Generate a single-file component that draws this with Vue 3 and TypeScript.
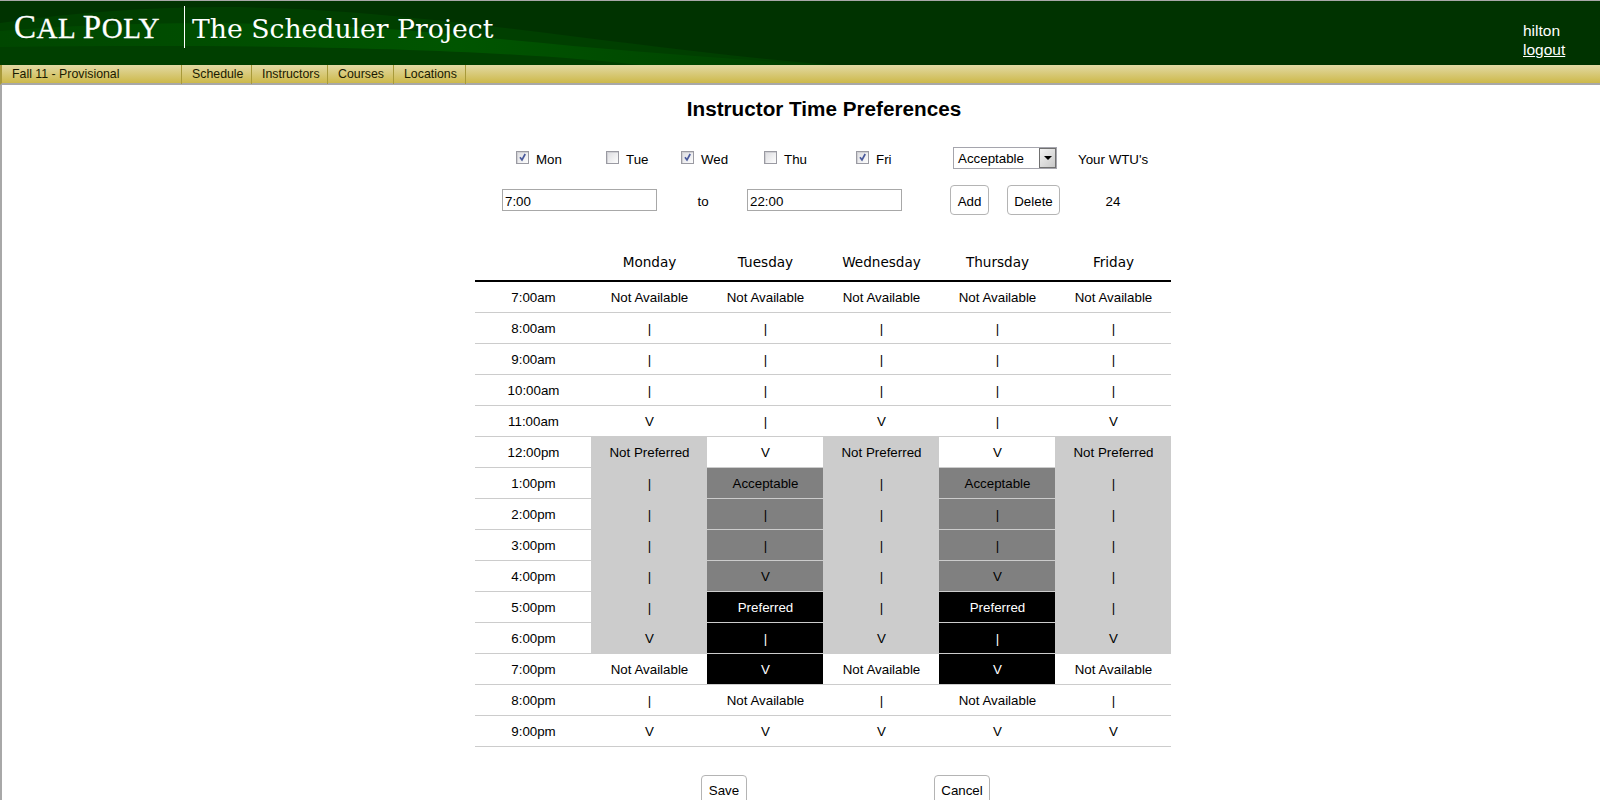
<script setup lang="ts">
type Tone = '' | 'np' | 'ac' | 'pr'
interface Cell { text: string; tone: Tone }

const navItems = ['Schedule', 'Instructors', 'Courses', 'Locations']
const days = [
  { name: 'Mon', on: true, cls: 'w90' },
  { name: 'Tue', on: false, cls: 'w75' },
  { name: 'Wed', on: true, cls: 'w83' },
  { name: 'Thu', on: false, cls: 'w92' },
  { name: 'Fri', on: true, cls: 'w97' },
]
const headers = ['Monday', 'Tuesday', 'Wednesday', 'Thursday', 'Friday']

const NA = 'Not Available'
const NP = 'Not Preferred'
const AC = 'Acceptable'
const PR = 'Preferred'
const B = '|'
const V = 'V'

const raw: [string, string[], Tone[]][] = [
  ['7:00am', [NA, NA, NA, NA, NA], ['', '', '', '', '']],
  ['8:00am', [B, B, B, B, B], ['', '', '', '', '']],
  ['9:00am', [B, B, B, B, B], ['', '', '', '', '']],
  ['10:00am', [B, B, B, B, B], ['', '', '', '', '']],
  ['11:00am', [V, B, V, B, V], ['', '', '', '', '']],
  ['12:00pm', [NP, V, NP, V, NP], ['np', '', 'np', '', 'np']],
  ['1:00pm', [B, AC, B, AC, B], ['np', 'ac', 'np', 'ac', 'np']],
  ['2:00pm', [B, B, B, B, B], ['np', 'ac', 'np', 'ac', 'np']],
  ['3:00pm', [B, B, B, B, B], ['np', 'ac', 'np', 'ac', 'np']],
  ['4:00pm', [B, V, B, V, B], ['np', 'ac', 'np', 'ac', 'np']],
  ['5:00pm', [B, PR, B, PR, B], ['np', 'pr', 'np', 'pr', 'np']],
  ['6:00pm', [V, B, V, B, V], ['np', 'pr', 'np', 'pr', 'np']],
  ['7:00pm', [NA, V, NA, V, NA], ['', 'pr', '', 'pr', '']],
  ['8:00pm', [B, NA, B, NA, B], ['', '', '', '', '']],
  ['9:00pm', [V, V, V, V, V], ['', '', '', '', '']],
]
const rows = raw.map(([time, texts, tones]) => ({
  time,
  cells: texts.map((text, i): Cell => ({ text, tone: tones[i] })),
}))
</script>

<template>
  <div class="page">
    <header class="banner">
      <svg class="swoosh" viewBox="0 0 1600 64" preserveAspectRatio="none" aria-hidden="true">
        <defs>
          <linearGradient id="bandB" x1="0" y1="0" x2="1" y2="0">
            <stop offset="0" stop-color="#004700" />
            <stop offset="0.55" stop-color="#005500" />
            <stop offset="1" stop-color="#004000" />
          </linearGradient>
        </defs>
        <path d="M0 0H1600V64H0Z" fill="#003300" />
        <path d="M0 22C100 8 200 3 300 8C480 18 640 48 830 64H0Z" fill="#003f00" />
        <path d="M0 30C150 18 330 20 480 36C600 48 720 58 830 64H640C520 50 300 42 0 46Z" fill="url(#bandB)" />
      </svg>
      <div class="logo"><span class="cap">C</span>AL <span class="cap">P</span>OLY</div>
      <div class="divider"></div>
      <div class="title">The Scheduler Project</div>
      <div class="user">
        <div>hilton</div>
        <a class="logout">logout</a>
      </div>
    </header>

    <nav class="nav">
      <div class="term">Fall 11 - Provisional</div>
      <a v-for="item in navItems" :key="item" class="nav-item">{{ item }}</a>
    </nav>

    <main class="main">
      <h1 class="heading">Instructor Time Preferences</h1>

      <div class="form-row first">
        <label v-for="d in days" :key="d.name" class="day" :class="d.cls">
          <span class="check">
            <svg v-if="d.on" viewBox="0 0 11 11" width="11" height="11" aria-hidden="true">
              <path d="M3 5.2L5 8L8.2 2" fill="none" stroke="#4a5a9c" stroke-width="1.7" />
            </svg>
          </span>
          <span class="day-name">{{ d.name }}</span>
        </label>
        <div class="select">
          <span class="select-value">Acceptable</span>
          <span class="select-arrow"></span>
        </div>
        <div class="wtu-label">Your WTU's</div>
      </div>

      <div class="form-row second">
        <input class="time" type="text" value="7:00" />
        <span class="to">to</span>
        <input class="time" type="text" value="22:00" />
        <button class="btn add" type="button">Add</button>
        <button class="btn del" type="button">Delete</button>
        <span class="wtu">24</span>
      </div>

      <table class="grid">
        <thead>
          <tr>
            <th></th>
            <th v-for="h in headers" :key="h">{{ h }}</th>
          </tr>
        </thead>
        <tbody>
          <tr v-for="r in rows" :key="r.time">
            <td>{{ r.time }}</td>
            <td v-for="(c, i) in r.cells" :key="i" :class="c.tone">{{ c.text }}</td>
          </tr>
        </tbody>
      </table>

      <div class="actions">
        <button class="btn save" type="button">Save</button>
        <button class="btn cancel" type="button">Cancel</button>
      </div>
    </main>
  </div>
</template>

<style scoped>
.page {
  width: 1600px;
  height: 800px;
  overflow: hidden;
  display: flex;
  flex-direction: column;
  font-family: "Liberation Sans", Arial, sans-serif;
  font-size: 13.33px;
  color: #000;
  background: #fff;
}
.banner {
  position: relative;
  height: 64px;
  flex: none;
  border-top: 1px solid #a8a8a8;
  display: flex;
  align-items: flex-start;
  background: #003300;
  color: #fff;
}
.swoosh {
  position: absolute;
  inset: 0;
  width: 100%;
  height: 100%;
}
.logo,
.divider,
.title,
.user {
  position: relative;
}
.logo {
  margin: 8px 0 0 14px;
  width: 170px;
  font-family: "Liberation Serif", "Times New Roman", serif;
  font-size: 29px;
  line-height: 36px;
  letter-spacing: 0.5px;
  -webkit-text-stroke: 0.3px #fff;
  white-space: nowrap;
}
.cap {
  font-size: 33px;
}
.divider {
  width: 1px;
  height: 42px;
  margin-top: 5px;
  background: #fff;
}
.title {
  margin: 10px 0 0 7px;
  font-family: "DejaVu Serif", serif;
  font-size: 26.67px;
  line-height: 36px;
  white-space: nowrap;
}
.user {
  margin: 20px 0 0 auto;
  width: 77px;
  font-size: 15.5px;
  line-height: 19px;
}
.logout {
  text-decoration: underline;
}
.nav {
  height: 18px;
  flex: none;
  display: grid;
  grid-template-columns: 180px 70px 76px 66px 72px;
  border-left: 2px solid #a89a3a;
  background: linear-gradient(#e2d9a4, #cdb94a);
  border-bottom: 2px solid #a8a8a8;
  font-size: 12.35px;
  line-height: 19px;
  color: #1a1a00;
}
.term {
  padding-left: 10px;
  border-right: 1px solid #a89a3a;
}
.nav-item {
  padding-left: 10px;
  border-right: 1px solid #a89a3a;
}
.main {
  flex: 1;
  border-left: 2px solid #a8a8a8;
  padding-left: 473px;
}
.heading {
  box-sizing: border-box;
  width: 696px;
  margin: 13px 0 0;
  padding-left: 2px;
  text-align: center;
  font-size: 20.7px;
  line-height: 22px;
  font-weight: bold;
}
.form-row {
  display: flex;
  align-items: center;
}
.first {
  height: 22px;
  margin-top: 28px;
  padding-left: 41px;
}
.day {
  display: flex;
  align-items: center;
}
.w90 { width: 90px; }
.w75 { width: 75px; }
.w83 { width: 83px; }
.w92 { width: 92px; }
.w97 { width: 97px; }
.check {
  box-sizing: border-box;
  width: 13px;
  height: 13px;
  border: 1px solid #9a9aa2;
  box-shadow: inset 1px 1px 0 #d0d0d4;
  background: linear-gradient(135deg, #dcdce0, #fdfdfd);
  display: flex;
  margin-top: -3px;
}
.day-name {
  margin-left: 7px;
}
.select {
  box-sizing: border-box;
  width: 104px;
  height: 22px;
  margin-top: -2px;
  border: 1px solid #a5a5ad;
  display: flex;
  align-items: center;
  justify-content: space-between;
}
.select-value {
  padding-left: 4px;
}
.select-arrow {
  position: relative;
  box-sizing: border-box;
  width: 17px;
  height: 20px;
  border: 1px solid #707070;
  background: linear-gradient(135deg, #f4f4f4, #c8c8c8);
}
.select-arrow::after {
  content: "";
  position: absolute;
  left: 4px;
  top: 7px;
  border-left: 4px solid transparent;
  border-right: 4px solid transparent;
  border-top: 4px solid #000;
}
.wtu-label {
  margin-left: 21px;
  white-space: nowrap;
}
.second {
  height: 30px;
  margin-top: 15px;
  padding-left: 27px;
}
.time {
  box-sizing: border-box;
  width: 155px;
  height: 22px;
  border: 1px solid #a8a8a8;
  border-radius: 0;
  padding: 2px 2px 0;
  font: 13.33px "Liberation Sans", Arial, sans-serif;
  color: #000;
  outline: none;
}
.to {
  box-sizing: border-box;
  width: 90px;
  padding: 2px 0 0 2px;
  text-align: center;
}
.btn {
  box-sizing: border-box;
  height: 30px;
  padding: 2px 0 0;
  background: #fff;
  border: 1px solid #b4b4b4;
  border-radius: 4px;
  font: 13.33px "Liberation Sans", Arial, sans-serif;
  color: #000;
}
.add {
  width: 39px;
  margin-left: 48px;
}
.del {
  width: 53px;
  margin-left: 18px;
}
.wtu {
  box-sizing: border-box;
  width: 104px;
  padding: 2px 0 0 2px;
  text-align: center;
}
.grid {
  width: 696px;
  margin-top: 18px;
  border-collapse: collapse;
  table-layout: fixed;
}
.grid th {
  height: 48px;
  padding: 10px 0 0 1px;
  box-sizing: border-box;
  border-bottom: 2px solid #000;
  font-family: "DejaVu Sans", Verdana, sans-serif;
  font-size: 13.6px;
  font-weight: normal;
  vertical-align: middle;
}
.grid td {
  height: 31px;
  padding: 2px 0 0 1px;
  box-sizing: border-box;
  text-align: center;
  border-bottom: 1px solid #ccc;
}
.grid td.np { background: #ccc; }
.grid td.ac { background: #808080; }
.grid td.pr { background: #000; color: #fff; }
.actions {
  display: flex;
  margin-top: 28px;
  padding-left: 226px;
}
.save { width: 46px; }
.cancel { width: 56px; margin-left: 187px; }
</style>

<style>
html, body { overflow: hidden; }
</style>
